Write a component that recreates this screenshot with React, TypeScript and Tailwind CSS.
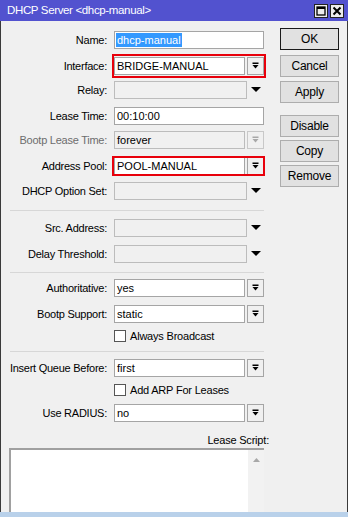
import React from "react";

const FONT = { fontFamily: '"Liberation Sans", Arial, sans-serif' };

function DropIcon({ disabled }: { disabled?: boolean }) {
  const c = disabled ? "#a8a8a8" : "#000";
  return (
    <svg width="9" height="8" viewBox="0 0 9 8">
      <rect x="1.5" y="0.5" width="6" height="1.5" fill={c} />
      <polygon points="1.5,3 7.5,3 4.5,6.5" fill={c} />
    </svg>
  );
}

function Tri() {
  return (
    <svg width="10" height="6" viewBox="0 0 10 6">
      <polygon points="0,0 10,0 5,5" fill="#000" />
    </svg>
  );
}

function Label({ text, disabled }: { text: string; disabled?: boolean }) {
  return (
    <div
      className={`w-[106px] shrink-0 text-right leading-[18px] tracking-[-0.25px] ${disabled ? "text-[#6d6d6d]" : "text-black"}`}
    >
      {text}
    </div>
  );
}

function TextRow({ label, value, mt, selected }: { label: string; value: string; mt: string; selected?: boolean }) {
  return (
    <div className={`flex h-[18px] items-center ${mt}`}>
      <Label text={label} />
      <div className="ml-[7px] flex h-[18px] w-[150px] items-center border border-[#a5a5a5] bg-white pl-[1px]">
        {selected ? (
          <span className="bg-[#3399ff] px-[1px] leading-[14px] text-white">{value}</span>
        ) : (
          <span className="px-[1px] leading-[14px]">{value}</span>
        )}
      </div>
    </div>
  );
}

function SelectRow({
  label,
  value,
  mt,
  red,
  disabled,
}: {
  label: string;
  value: string;
  mt: string;
  red?: "iface" | "pool";
  disabled?: boolean;
}) {
  return (
    <div className={`flex h-[18px] items-center ${mt}`}>
      <Label text={label} disabled={disabled} />
      <div className="relative ml-[7px] flex h-[18px] items-center">
        <div
          className={`flex h-[18px] w-[131px] items-center border pl-[2px] leading-[14px] ${
            disabled ? "border-[#bcbcbc] bg-[#f0f0f0]" : "border-[#a5a5a5] bg-white"
          }`}
        >
          {value}
        </div>
        <div
          className={`ml-[2px] flex h-[18px] w-[17px] items-center justify-center border ${
            disabled ? "border-[#c8c8c8]" : "border-[#a5a5a5]"
          } bg-[#f0f0f0]`}
        >
          <DropIcon disabled={disabled} />
        </div>
        {red === "iface" && (
          <div className="pointer-events-none absolute -bottom-[3px] -left-[2px] -right-[2px] -top-[3px] border-2 border-[#e8000b]" />
        )}
        {red === "pool" && (
          <div className="pointer-events-none absolute -bottom-[1px] -left-[2px] -right-[1px] -top-[1px] border-2 border-[#e8000b]" />
        )}
      </div>
    </div>
  );
}

function EmptyTriRow({ label, mt }: { label: string; mt: string }) {
  return (
    <div className={`flex h-[18px] items-center ${mt}`}>
      <Label text={label} />
      <div className="ml-[7px] h-[18px] w-[133px] border border-[#bcbcbc] bg-[#f0f0f0]" />
      <div className="ml-[4px] flex h-[18px] items-center">
        <Tri />
      </div>
    </div>
  );
}

function CheckRow({ text, mt }: { text: string; mt: string }) {
  return (
    <div className={`flex h-[14px] items-center pl-[113px] ${mt}`}>
      <div className="h-[12px] w-[12px] border border-[#555] bg-white" />
      <span className="ml-[4px] leading-[14px] tracking-[-0.2px]">{text}</span>
    </div>
  );
}

function Sep({ mt }: { mt: string }) {
  return <div className={`ml-[9px] h-[1px] w-[254px] bg-[#d7d7d7] ${mt}`} />;
}

function Btn({ text, mt, def }: { text: string; mt: string; def?: boolean }) {
  return (
    <div
      className={`flex h-[22px] w-[59px] items-center justify-center border bg-[#e1e1e1] text-[12px] tracking-[-0.2px] ${
        def ? "border-[#1a1a1a]" : "border-[#adadad]"
      } ${mt}`}
    >
      {text}
    </div>
  );
}

export default function App() {
  return (
    <div className="flex h-[517px] w-[348px] flex-col overflow-hidden bg-[#f0f0f0] text-[11px] text-black" style={FONT}>
      <div className="flex h-[21px] shrink-0 items-center bg-[#5252cf] pl-[7px] pr-[4px]">
        <span className="text-[11.5px] tracking-[-0.35px] text-white">DHCP Server &lt;dhcp-manual&gt;</span>
        <div className="ml-auto flex gap-[2px]">
          <div className="flex h-[14px] w-[14px] items-center justify-center border border-[#222] bg-[#ececec]">
            <svg width="10" height="10" viewBox="0 0 10 10">
              <rect x="1" y="1" width="8" height="8" fill="none" stroke="#000" strokeWidth="1.3" />
              <rect x="1" y="1" width="8" height="2" fill="#000" />
            </svg>
          </div>
          <div className="flex h-[14px] w-[14px] items-center justify-center border border-[#222] bg-[#ececec]">
            <svg width="10" height="10" viewBox="0 0 10 10">
              <path d="M1.5 1.5 L8.5 8.5 M8.5 1.5 L1.5 8.5" stroke="#000" strokeWidth="2" />
            </svg>
          </div>
        </div>
      </div>
      <div className="flex flex-1 border-l border-r border-[#3a3a3a]">
        <div className="flex w-[279px] flex-col">
          <TextRow label="Name:" value="dhcp-manual" mt="mt-[10px]" selected />
          <SelectRow label="Interface:" value="BRIDGE-MANUAL" mt="mt-[8px]" red="iface" />
          <EmptyTriRow label="Relay:" mt="mt-[6px]" />
          <TextRow label="Lease Time:" value="00:10:00" mt="mt-[8px]" />
          <SelectRow label="Bootp Lease Time:" value="forever" mt="mt-[6px]" disabled />
          <SelectRow label="Address Pool:" value="POOL-MANUAL" mt="mt-[8px]" red="pool" />
          <EmptyTriRow label="DHCP Option Set:" mt="mt-[7px]" />
          <Sep mt="mt-[10px]" />
          <EmptyTriRow label="Src. Address:" mt="mt-[8px]" />
          <EmptyTriRow label="Delay Threshold:" mt="mt-[8px]" />
          <Sep mt="mt-[9px]" />
          <SelectRow label="Authoritative:" value="yes" mt="mt-[6px]" />
          <SelectRow label="Bootp Support:" value="static" mt="mt-[8px]" />
          <CheckRow text="Always Broadcast" mt="mt-[6px]" />
          <Sep mt="mt-[8px]" />
          <SelectRow label="Insert Queue Before:" value="first" mt="mt-[7px]" />
          <CheckRow text="Add ARP For Leases" mt="mt-[6px]" />
          <SelectRow label="Use RADIUS:" value="no" mt="mt-[7px]" />
          <div className="mt-[11px] h-[14px] w-[268px] text-right leading-[14px] tracking-[-0.2px]">Lease Script:</div>
          <div className="ml-[8px] mt-[1px] flex w-[255px] flex-1 border-l-2 border-t-2 border-[#a0a0a0] bg-white">
            <div className="flex-1" />
            <div className="flex w-[16px] justify-center bg-[#f2f2f2] pt-[8px]">
              <svg width="7" height="4" viewBox="0 0 7 4">
                <polygon points="0,4 7,4 3.5,0" fill="#a8a8a8" />
              </svg>
            </div>
          </div>
        </div>
        <div className="flex w-[59px] flex-col pt-[7px]">
          <Btn text="OK" mt="" def />
          <Btn text="Cancel" mt="mt-[5px]" />
          <Btn text="Apply" mt="mt-[4px]" />
          <Btn text="Disable" mt="mt-[12px]" />
          <Btn text="Copy" mt="mt-[3px]" />
          <Btn text="Remove" mt="mt-[3px]" />
        </div>
      </div>
      <div className="h-[5px] shrink-0 bg-[#b9d1ea]" />
    </div>
  );
}
